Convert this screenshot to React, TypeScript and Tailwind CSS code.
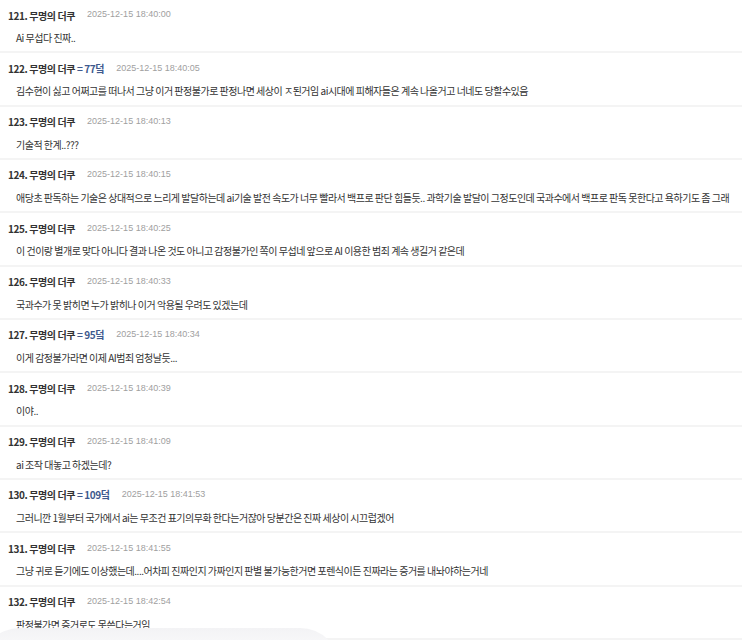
const comments = [
  { no: 121, badge: '', time: '2025-12-15 18:40:00', text: 'Ai 무섭다 진짜..' },
  { no: 122, badge: '77', time: '2025-12-15 18:40:05', text: '김수현이 싫고 어쩌고를 떠나서 그냥 이거 판정불가로 판정나면 세상이 ㅈ된거임 ai시대에 피해자들은 계속 나올거고 너네도 당할수있음' },
  { no: 123, badge: '', time: '2025-12-15 18:40:13', text: '기술적 한계..???' },
  { no: 124, badge: '', time: '2025-12-15 18:40:15', text: '애당초 판독하는 기술은 상대적으로 느리게 발달하는데 ai기술 발전 속도가 너무 빨라서 백프로 판단 힘들듯.. 과학기술 발달이 그정도인데 국과수에서 백프로 판독 못한다고 욕하기도 좀 그래' },
  { no: 125, badge: '', time: '2025-12-15 18:40:25', text: '이 건이랑 별개로 맞다 아니다 결과 나온 것도 아니고 감정불가인 쪽이 무섭네 앞으로 AI 이용한 범죄 계속 생길거 같은데' },
  { no: 126, badge: '', time: '2025-12-15 18:40:33', text: '국과수가 못 밝히면 누가 밝히나 이거 악용될 우려도 있겠는데' },
  { no: 127, badge: '95', time: '2025-12-15 18:40:34', text: '이게 감정불가라면 이제 AI범죄 엄청날듯...' },
  { no: 128, badge: '', time: '2025-12-15 18:40:39', text: '이야..' },
  { no: 129, badge: '', time: '2025-12-15 18:41:09', text: 'ai 조작 대놓고 하겠는데?' },
  { no: 130, badge: '109', time: '2025-12-15 18:41:53', text: '그러니깐 1월부터 국가에서 ai는 무조건 표기의무화 한다는거잖아 당분간은 진짜 세상이 시끄럽겠어' },
  { no: 131, badge: '', time: '2025-12-15 18:41:55', text: '그냥 귀로 듣기에도 이상했는데....어차피 진짜인지 가짜인지 판별 불가능한거면 포렌식이든 진짜라는 증거를 내놔야하는거네' },
  { no: 132, badge: '', time: '2025-12-15 18:42:54', text: '판정불가면 증거로도 못쓴다는거임' },
]

export default function App() {
  return (
    <div
      className="relative w-[742px] h-[640px] overflow-hidden bg-white text-[#333]"
      style={{ fontFamily: '"Noto Sans CJK KR", "Noto Sans", sans-serif' }}
    >
      <ul>
        {comments.map((c) => (
          <li key={c.no} className="h-[53.33px] border-b-2 border-[#f4f4f4] pl-2 pt-[6px]">
            <div className="flex items-center h-[18px]">
              <span className="text-[10px] font-bold tracking-[-0.4px] text-[#333]">
                {c.no}. 무명의 더쿠
                {c.badge && <span className="text-[#3f5a8e]"> = {c.badge}덬</span>}
              </span>
              <span
                className="ml-3 text-[9px] text-[#a0a0a0]"
                style={{ fontFamily: '"Liberation Sans", Arial, sans-serif' }}
              >
                {c.time}
              </span>
            </div>
            <p className="mt-[5px] pl-2 text-[10px] leading-[18px] tracking-[-0.5px] text-[#333] whitespace-nowrap">
              {c.text}
            </p>
          </li>
        ))}
      </ul>
      <div className="absolute left-[-20px] top-[628px] w-[360px] h-[40px] rounded-t-[40px] bg-gradient-to-b from-[#f3f3f5] to-white" />
    </div>
  )
}
